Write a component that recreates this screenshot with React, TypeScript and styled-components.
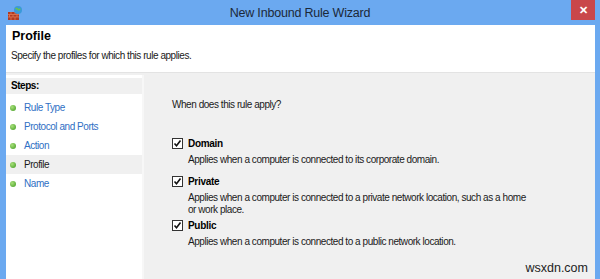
import styled, { createGlobalStyle, css } from "styled-components";

const Global = createGlobalStyle`
  html, body { margin: 0; padding: 0; }
  body { font-family: "Liberation Sans", Arial, sans-serif; background: #6ba9f0; }
`;

// Tahoma-ish dialog text: narrower than Liberation Sans at the same size
const dialogText = css`
  font-size: 10px;
  letter-spacing: -0.45px;
  color: #1a1a1a;
`;

const Window = styled.div`
  width: 600px;
  height: 279px;
  background: #6ba9f0;
  display: flex;
  flex-direction: column;
  overflow: hidden;
  position: relative;
`;

const TitleBar = styled.div`
  height: 25px;
  display: grid;
  grid-template-columns: 30px 1fr 30px;
  align-items: center;
`;

const Title = styled.div`
  text-align: center;
  font-size: 12.5px;
  letter-spacing: -0.2px;
  color: #1b2838;
  padding-top: 1px;
`;

const Close = styled.div`
  align-self: start;
  width: 24px;
  height: 20px;
  background: #c9474a;
  color: #fff;
  font-size: 11px;
  font-weight: bold;
  display: flex;
  align-items: center;
  justify-content: center;
  margin-left: 1px;
`;

const Body = styled.div`
  flex: 1;
  margin: 0 5px 0 6px;
  background: #f0f0f0;
  display: flex;
  flex-direction: column;
`;

const Header = styled.div`
  background: #fff;
  height: 48px;
  padding: 4px 0 0 6px;
  box-sizing: border-box;
  border-bottom: 1px solid #e3e3e3;
`;

const Heading = styled.div`
  font-size: 12.5px;
  font-weight: bold;
  color: #000;
`;

const Subheading = styled.div`
  ${dialogText};
  margin-top: 7px;
  margin-left: -1px;
`;

const Main = styled.div`
  flex: 1;
  display: flex;
  padding-top: 2px;
`;

const Steps = styled.div`
  width: 136px;
  background: #fff;
  border-right: 2px solid #f7f7f7;
`;

const StepsTitle = styled.div`
  ${dialogText};
  background: #f0f0f0;
  height: 16px;
  line-height: 16px;
  padding-left: 5px;
  font-weight: bold;
  color: #000;
  margin-top: 3px;
  margin-bottom: 4px;
`;

const Step = styled.div<{ $active?: boolean }>`
  ${dialogText};
  height: 19px;
  display: flex;
  align-items: center;
  gap: 8px;
  padding-left: 4px;
  color: ${(p) => (p.$active ? "#1a1a1a" : "#2f6fc4")};
  background: ${(p) => (p.$active ? "#f0f0f0" : "transparent")};
`;

const Dot = styled.span`
  width: 6px;
  height: 6px;
  border-radius: 50%;
  background: radial-gradient(circle at 35% 35%, #a8e07a, #3f9a20);
`;

const Content = styled.div`
  flex: 1;
  padding: 24px 0 0 28px;
`;

const Question = styled.div`
  ${dialogText};
  margin-bottom: 27px;
`;

const Option = styled.div<{ $after: number }>`
  display: grid;
  grid-template-columns: 16px 1fr;
  margin-bottom: ${(p) => p.$after}px;
`;

const Box = styled.span`
  width: 11px;
  height: 11px;
  border: 1px solid #333;
  background: #fff;
  box-sizing: border-box;
  margin-top: 1px;
  display: flex;
  align-items: center;
  justify-content: center;
`;

const Label = styled.div`
  ${dialogText};
  font-weight: bold;
  color: #000;
  line-height: 14px;
  letter-spacing: -0.3px;
`;

const Desc = styled.div`
  ${dialogText};
  grid-column: 2;
  line-height: 12px;
  margin-top: 3px;
  max-width: 345px;
`;

const Watermark = styled.div`
  position: absolute;
  right: 12px;
  bottom: 4px;
  font-size: 12.5px;
  color: #222;
`;

function Check() {
  return (
    <Box>
      <svg width="9" height="9" viewBox="0 0 9 9">
        <path d="M1.5 4.5 L3.5 6.8 L7.5 1.5" fill="none" stroke="#111" strokeWidth="1.6" />
      </svg>
    </Box>
  );
}

function FirewallIcon() {
  return (
    <svg width="16" height="16" viewBox="0 0 16 16" style={{ marginLeft: 7, marginTop: 1 }}>
      <rect x="1" y="7" width="11" height="8" fill="#b03a22" />
      <path d="M1 9.5h11M1 12h11M4 7v2.5M8 7v2.5M2.5 9.5v2.5M6 9.5v2.5M10 9.5v2.5M4 12v3M8 12v3" stroke="#e07a55" strokeWidth="0.8" />
      <circle cx="11" cy="5" r="4" fill="#3a9ad9" />
      <path d="M8.5 4c1-1 2-.5 2.5.5s1.5.5 2-1" stroke="#6cc24a" strokeWidth="1.4" fill="none" />
    </svg>
  );
}

const options = [
  { name: "Domain", desc: "Applies when a computer is connected to its corporate domain.", after: 9 },
  { name: "Private", desc: "Applies when a computer is connected to a private network location, such as a home or work place.", after: 3 },
  { name: "Public", desc: "Applies when a computer is connected to a public network location.", after: 0 },
];

const steps = ["Rule Type", "Protocol and Ports", "Action", "Profile", "Name"];

export default function App() {
  return (
    <>
      <Global />
      <Window>
        <TitleBar>
          <FirewallIcon />
          <Title>New Inbound Rule Wizard</Title>
          <Close>✕</Close>
        </TitleBar>
        <Body>
          <Header>
            <Heading>Profile</Heading>
            <Subheading>Specify the profiles for which this rule applies.</Subheading>
          </Header>
          <Main>
            <Steps>
              <StepsTitle>Steps:</StepsTitle>
              {steps.map((s) => (
                <Step key={s} $active={s === "Profile"}>
                  <Dot />
                  {s}
                </Step>
              ))}
            </Steps>
            <Content>
              <Question>When does this rule apply?</Question>
              {options.map((o) => (
                <Option key={o.name} $after={o.after}>
                  <Check />
                  <Label>{o.name}</Label>
                  <Desc>{o.desc}</Desc>
                </Option>
              ))}
            </Content>
          </Main>
        </Body>
        <Watermark>wsxdn.com</Watermark>
      </Window>
    </>
  );
}
